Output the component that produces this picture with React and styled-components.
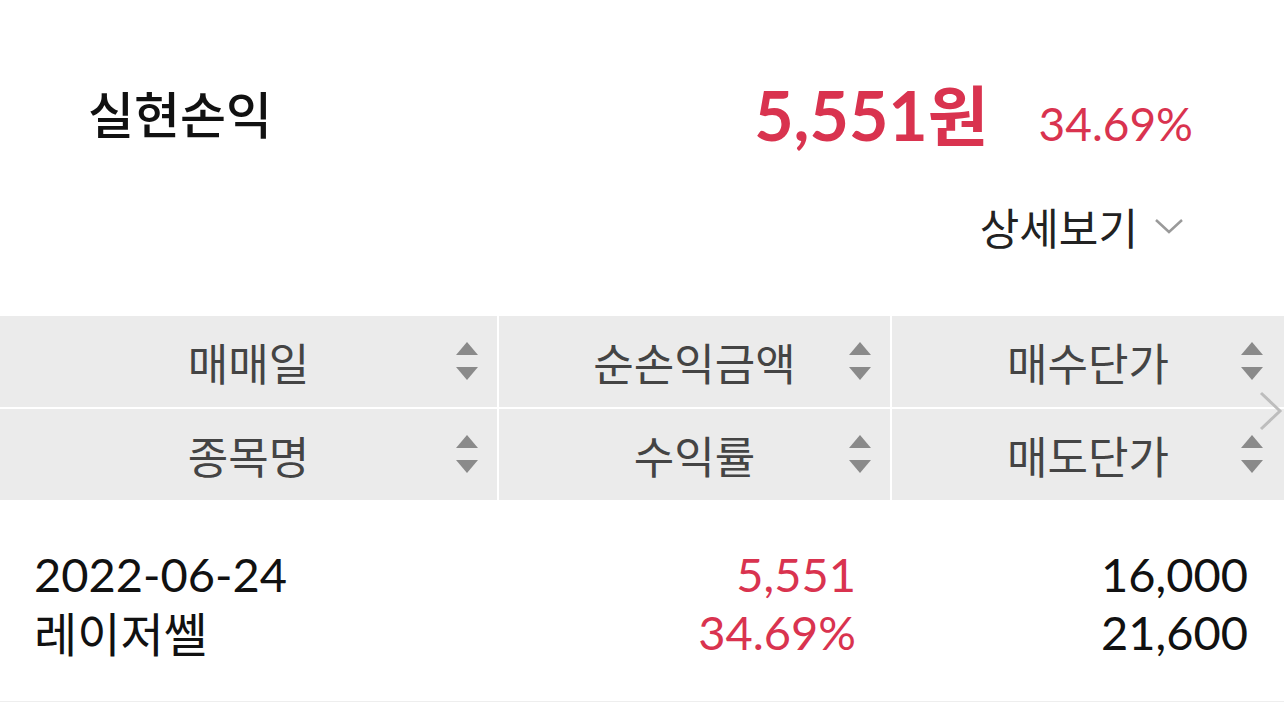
import React from "react"
import styled, { createGlobalStyle } from "styled-components"

const GlobalStyle = createGlobalStyle`
    html, body {
        margin: 0;
        padding: 0;
        background: #fff;
    }
    body {
        font-family: Lato, "Noto Sans CJK KR", sans-serif;
        color: #111;
    }
`

const RED = "#d9334f"
const KO = `"Noto Sans CJK KR", sans-serif`

const Page = styled.div`
    width: 1284px;
    height: 702px;
    overflow: hidden;
    position: relative;
`

const Summary = styled.section`
    display: flex;
    align-items: center;
    justify-content: space-between;
    height: 80px;
    margin-top: 72px;
    padding: 0 91px 0 88px;
`

const SummaryTitle = styled.h1`
    margin: 0;
    font-family: ${KO};
    font-size: 50px;
    font-weight: 500;
    color: #111;
`

const SummaryValues = styled.div`
    display: flex;
    align-items: baseline;
    gap: 50px;
`

const Amount = styled.span`
    font-size: 68px;
    font-weight: 700;
    color: ${RED};

    span {
        font-family: ${KO};
        font-size: 66px;
    }
`

const Rate = styled.span`
    font-size: 46px;
    font-weight: 400;
    color: ${RED};
`

const DetailRow = styled.div`
    display: flex;
    justify-content: flex-end;
    align-items: center;
    height: 60px;
    margin-top: 44px;
    padding-right: 100px;
`

const DetailButton = styled.button`
    display: flex;
    align-items: center;
    gap: 16px;
    border: 0;
    background: none;
    padding: 0;
    font-family: ${KO};
    font-size: 43px;
    color: #222;
`

const Table = styled.div`
    margin-top: 60px;
    position: relative;
`

const Head = styled.div`
    display: grid;
    grid-template-columns: 497px 391px 1fr;
    grid-auto-rows: 91px;
    gap: 2px;
    background: #fff;
`

const HeadCell = styled.div`
    position: relative;
    display: flex;
    align-items: center;
    justify-content: center;
    background: #ebebeb;
    font-family: ${KO};
    font-size: 44px;
    color: #444;
`

const SortIcon = styled.svg`
    position: absolute;
    right: ${p => p.$right}px;
    top: 50%;
    transform: translateY(-50%);
`

const ScrollArrow = styled.svg`
    position: absolute;
    right: 0;
    top: 75px;
`

const Body = styled.div`
    display: grid;
    grid-template-columns: 497px 391px 1fr;
    padding: 45px 0 40px;
    border-bottom: 2px solid #eeeeee;
    column-gap: 2px;
`

const BodyCell = styled.div`
    display: flex;
    flex-direction: column;
    align-items: ${p => (p.$align === "left" ? "flex-start" : "flex-end")};
    padding: ${p => (p.$align === "left" ? "0 0 0 34px" : `0 ${p.$pad}px 0 0`)};
    font-size: 47px;
    line-height: 58px;
    color: ${p => (p.$red ? RED : "#111")};

    span:lang(ko) {
        font-family: ${KO};
        font-size: 47px;
    }
`

function Sort({ right }) {
    return (
        <SortIcon $right={right} width="22" height="40" viewBox="0 0 22 40">
            <polygon points="11,0 22,13 0,13" fill="#8a8a8a" />
            <polygon points="0,25 22,25 11,38" fill="#8a8a8a" />
        </SortIcon>
    )
}

const headers = [
    ["매매일", 19],
    ["순손익금액", 19],
    ["매수단가", 21],
    ["종목명", 19],
    ["수익률", 19],
    ["매도단가", 21],
]

export default function App() {
    return (
        <Page>
            <GlobalStyle />
            <Summary>
                <SummaryTitle>실현손익</SummaryTitle>
                <SummaryValues>
                    <Amount>5,551<span>원</span></Amount>
                    <Rate>34.69%</Rate>
                </SummaryValues>
            </Summary>
            <DetailRow>
                <DetailButton>
                    상세보기
                    <svg width="30" height="18" viewBox="0 0 30 18">
                        <polyline points="2,3 15,15 28,3" fill="none" stroke="#9a9a9a" strokeWidth="2.5" />
                    </svg>
                </DetailButton>
            </DetailRow>
            <Table>
                <Head>
                    {headers.map(([label, right]) => (
                        <HeadCell key={label}>
                            {label}
                            <Sort right={right} />
                        </HeadCell>
                    ))}
                </Head>
                <ScrollArrow width="26" height="40" viewBox="0 0 26 40">
                    <polyline points="3,2 22,20 3,38" fill="none" stroke="#bdbdbd" strokeWidth="3" />
                </ScrollArrow>
                <Body>
                    <BodyCell $align="left">
                        <span>2022-06-24</span>
                        <span lang="ko">레이저쎌</span>
                    </BodyCell>
                    <BodyCell $pad={34} $red>
                        <span>5,551</span>
                        <span>34.69%</span>
                    </BodyCell>
                    <BodyCell $pad={36}>
                        <span>16,000</span>
                        <span>21,600</span>
                    </BodyCell>
                </Body>
            </Table>
        </Page>
    )
}
